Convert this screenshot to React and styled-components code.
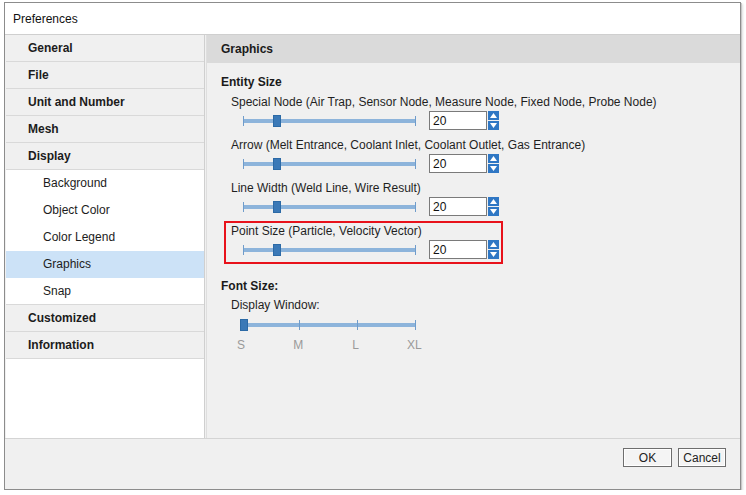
import React from 'react';
import styled, { createGlobalStyle } from 'styled-components';

const GlobalStyle = createGlobalStyle`
  html, body {
    margin: 0;
    padding: 0;
    background: #ffffff;
  }
  body {
    font-family: "Liberation Sans", Arial, sans-serif;
    font-size: 12px;
    color: #1a1a1a;
  }
`;

const Window = styled.div`
  margin: 2px 0 0 4px;
  width: 735px;
  height: 486px;
  border: 1px solid #8c8c8c;
  background: #f0f0f0;
  box-shadow: 1px 1px 0 #c8c8c8, 2px 2px 2px #e0e0e0;
  display: flex;
  flex-direction: column;
`;

const TitleBar = styled.div`
  height: 31px;
  background: #ffffff;
  display: flex;
  align-items: center;
  padding-left: 8px;
  font-size: 12px;
  color: #111;
  border-bottom: 1px solid #cfcfcf;
`;

const Body = styled.div`
  display: flex;
  height: 403px;
  padding-left: 1px;
  border-bottom: 1px solid #d4d4d4;
`;

const Sidebar = styled.div`
  width: 198px;
  background: #ffffff;
  border-right: 1px solid #cfcfcf;
  display: flex;
  flex-direction: column;
`;

const NavItem = styled.div`
  height: 26px;
  display: flex;
  align-items: center;
  padding-left: ${p => (p.$sub ? '37px' : '22px')};
  font-weight: ${p => (p.$sub ? 'normal' : 'bold')};
  background: ${p => (p.$active ? '#cce2f7' : p.$sub ? '#ffffff' : '#f0f0f0')};
  border-bottom: 1px solid ${p => (p.$sub && !p.$last ? 'transparent' : '#d9d9d9')};
  color: #1c1c1c;
`;

const Content = styled.div`
  flex: 1;
  margin-left: 1px;
  border-left: 1px solid #dedede;
  display: flex;
  flex-direction: column;
`;

const PanelHeader = styled.div`
  height: 28px;
  background: #dadada;
  display: flex;
  align-items: center;
  padding-left: 14px;
  font-weight: bold;
`;

const PanelBody = styled.div`
  padding: 12px 0 0 14px;
  display: flex;
  flex-direction: column;
`;

const SectionTitle = styled.div`
  font-weight: bold;
  height: 14px;
  line-height: 14px;
  margin-bottom: ${p => p.$mb || 0}px;
  margin-top: ${p => p.$mt || 0}px;
`;

const Group = styled.div`
  width: 270px;
  margin-left: 3px;
  height: 39px;
  border: 2px solid ${p => (p.$highlight ? '#e8121b' : 'transparent')};
  display: flex;
  flex-direction: column;
  padding-left: 5px;
`;

const FieldLabel = styled.div`
  height: 16px;
  line-height: 16px;
  white-space: nowrap;
  color: #1f1f1f;
  margin-top: ${p => p.$mt || 0}px;
  margin-left: ${p => p.$ml || 0}px;
`;

const SliderRow = styled.div`
  height: ${p => p.$h || 21}px;
  display: flex;
  align-items: center;
`;

const Track = styled.div`
  position: relative;
  margin-left: ${p => p.$ml}px;
  width: ${p => p.$w}px;
  height: 4px;
  background: #8db4db;
  flex-shrink: 0;
`;

const Cap = styled.div`
  position: absolute;
  top: -3px;
  width: 1px;
  height: 10px;
  background: #6f9ccb;
`;

const Thumb = styled.div`
  position: absolute;
  top: -4px;
  width: 8px;
  height: 12px;
  background: #3b79b7;
  border: 1px solid #2c6aa6;
  box-sizing: border-box;
`;

const NumberBox = styled.div`
  margin-left: 13px;
  width: 58px;
  height: 19px;
  box-sizing: border-box;
  background: #ffffff;
  border: 1px solid #7a7a7a;
  display: flex;
  align-items: center;
  padding-left: 3px;
  color: #111;
`;

const Spinner = styled.div`
  margin-left: 1px;
  display: flex;
  flex-direction: column;
  gap: 1px;
`;

const SpinBtn = styled.div`
  width: 11px;
  height: 9px;
  background: #2f77c4;
  display: flex;
  align-items: center;
  justify-content: center;
`;

const FontSlider = styled.div`
  margin-left: 5px;
  display: flex;
  flex-direction: column;
`;

const TickLabels = styled.div`
  width: 184px;
  margin-left: 9px;
  display: flex;
  justify-content: space-between;
  color: #9a9a9a;
  margin-top: 1px;
`;

const TickLabel = styled.span`
  width: 12px;
  text-align: center;
`;

const Footer = styled.div`
  flex: 1;
  display: flex;
  justify-content: flex-end;
  align-items: flex-start;
  padding: 9px 14px 0 0;
  gap: 6px;
`;

const Button = styled.button`
  width: ${p => p.$w}px;
  height: 19px;
  font-family: "Liberation Sans", Arial, sans-serif;
  font-size: 12px;
  color: #222;
  background: #f4f4f4;
  border: 1px solid #6e6e6e;
  box-shadow: inset 0 0 0 1px #ffffff;
  padding: 0;
`;

const Arrow = ({ up }) => (
  <svg width="7" height="5" viewBox="0 0 7 5">
    <path d={up ? 'M0 5 L3.5 0 L7 5 Z' : 'M0 0 L3.5 5 L7 0 Z'} fill="#ffffff" />
  </svg>
);

const Slider = ({ ml, width, thumb, ticks = [] }) => (
  <Track $ml={ml} $w={width}>
    <Cap style={{ left: 0 }} />
    {ticks.map(t => (
      <Cap key={t} style={{ left: t }} />
    ))}
    <Cap style={{ right: 0 }} />
    <Thumb style={{ left: thumb }} />
  </Track>
);

const SizeField = ({ label, highlight }) => (
  <Group $highlight={highlight}>
    <FieldLabel>{label}</FieldLabel>
    <SliderRow>
      <Slider ml={12} width={173} thumb={30} />
      <NumberBox>20</NumberBox>
      <Spinner>
        <SpinBtn><Arrow up /></SpinBtn>
        <SpinBtn><Arrow /></SpinBtn>
      </Spinner>
    </SliderRow>
  </Group>
);

const nav = [
  { label: 'General' },
  { label: 'File' },
  { label: 'Unit and Number' },
  { label: 'Mesh' },
  { label: 'Display' },
  { label: 'Background', sub: true },
  { label: 'Object Color', sub: true },
  { label: 'Color Legend', sub: true },
  { label: 'Graphics', sub: true, active: true },
  { label: 'Snap', sub: true, last: true },
  { label: 'Customized' },
  { label: 'Information' },
];

const fields = [
  'Special Node (Air Trap, Sensor Node, Measure Node, Fixed Node, Probe Node)',
  'Arrow (Melt Entrance, Coolant Inlet, Coolant Outlet, Gas Entrance)',
  'Line Width (Weld Line, Wire Result)',
  'Point Size (Particle, Velocity Vector)',
];

export default function App() {
  return (
    <>
      <GlobalStyle />
      <Window>
        <TitleBar>Preferences</TitleBar>
        <Body>
          <Sidebar>
            {nav.map(n => (
              <NavItem key={n.label} $sub={n.sub} $active={n.active} $last={n.last}>
                {n.label}
              </NavItem>
            ))}
          </Sidebar>
          <Content>
            <PanelHeader>Graphics</PanelHeader>
            <PanelBody>
              <SectionTitle $mb={3}>Entity Size</SectionTitle>
              {fields.map((f, i) => (
                <SizeField key={f} label={f} highlight={i === 3} />
              ))}
              <SectionTitle $mt={15}>Font Size:</SectionTitle>
              <FontSlider>
                <FieldLabel $mt={4} $ml={5}>Display Window:</FieldLabel>
                <SliderRow $h={24}>
                  <Slider ml={14} width={176} thumb={0} ticks={[59, 117]} />
                </SliderRow>
                <TickLabels>
                  <TickLabel>S</TickLabel>
                  <TickLabel>M</TickLabel>
                  <TickLabel>L</TickLabel>
                  <TickLabel>XL</TickLabel>
                </TickLabels>
              </FontSlider>
            </PanelBody>
          </Content>
        </Body>
        <Footer>
          <Button $w={49}>OK</Button>
          <Button $w={48}>Cancel</Button>
        </Footer>
      </Window>
    </>
  );
}
